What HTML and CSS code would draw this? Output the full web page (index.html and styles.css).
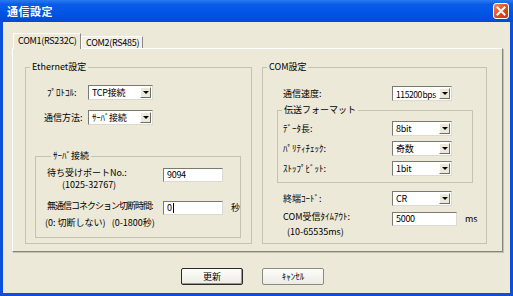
FILE: index.html
```html
<!DOCTYPE html>
<html lang="ja">
<head>
    <meta charset="UTF-8">
    <title>通信設定</title>
    <link rel="stylesheet" href="styles.css">
</head>
<body>
    <div class="window">
        <div class="titlebar">
            <span class="title">通信設定</span>
            <span class="close-btn">
                <svg width="10" height="10" viewBox="0 0 10 10">
                    <path d="M1.5 1.5 L8.5 8.5 M8.5 1.5 L1.5 8.5" stroke="#fff" stroke-width="2" stroke-linecap="square"/>
                </svg>
            </span>
        </div>

        <div class="client">
            <div class="tabs">
                <div class="tab active">COM1(RS232C)</div>
                <div class="tab">COM2(RS485)</div>
            </div>

            <div class="tab-panel">
                <fieldset class="group group-ethernet">
                    <legend>Ethernet設定</legend>
                    <div class="eth-grid">
                        <label class="indent">ﾌﾟﾛﾄｺﾙ:</label>
                        <div class="combo wide"><span>TCP接続</span><span class="combo-btn"></span></div>
                        <label>通信方法:</label>
                        <div class="combo wide"><span>ｻｰﾊﾞ接続</span><span class="combo-btn"></span></div>
                    </div>

                    <fieldset class="group group-server">
                        <legend>ｻｰﾊﾞ接続</legend>
                        <div class="field-row">
                            <div class="field-label">
                                <div>待ち受けポートNo.:</div>
                                <div class="hint">(1025-32767)</div>
                            </div>
                            <div class="textbox">9094</div>
                        </div>
                        <div class="field-row second">
                            <div class="field-label">
                                <div class="tight">無通信コネクション切断時間:</div>
                                <div class="hint hint-wide">(0: 切断しない)&nbsp;&nbsp;&nbsp;(0-1800秒)</div>
                            </div>
                            <div class="textbox">0<span class="caret"></span></div>
                            <span class="unit">秒</span>
                        </div>
                    </fieldset>
                </fieldset>

                <fieldset class="group group-com">
                    <legend>COM設定</legend>
                    <div class="com-row first">
                        <label>通信速度:</label>
                        <div class="combo"><span class="narrow">115200 bps</span><span class="combo-btn"></span></div>
                    </div>

                    <fieldset class="group group-format">
                        <legend>伝送フォーマット</legend>
                        <div class="com-row">
                            <label>ﾃﾞｰﾀ長:</label>
                            <div class="combo"><span>8bit</span><span class="combo-btn"></span></div>
                        </div>
                        <div class="com-row">
                            <label>ﾊﾟﾘﾃｨﾁｪｯｸ:</label>
                            <div class="combo"><span>奇数</span><span class="combo-btn"></span></div>
                        </div>
                        <div class="com-row">
                            <label>ｽﾄｯﾌﾟﾋﾞｯﾄ:</label>
                            <div class="combo"><span>1bit</span><span class="combo-btn"></span></div>
                        </div>
                    </fieldset>

                    <div class="com-row end-code">
                        <label>終端ｺｰﾄﾞ:</label>
                        <div class="combo"><span>CR</span><span class="combo-btn"></span></div>
                    </div>
                    <div class="com-row timeout">
                        <div class="com-label">
                            <div>COM受信ﾀｲﾑｱｳﾄ:</div>
                            <div class="hint">(10-65535ms)</div>
                        </div>
                        <div class="textbox wide">5000</div>
                        <span class="unit">ms</span>
                    </div>
                </fieldset>
            </div>

            <div class="buttons">
                <button class="btn default">更新</button>
                <button class="btn">ｷｬﾝｾﾙ</button>
            </div>
        </div>
    </div>
</body>
</html>
```

FILE: styles.css
```css
* {
    box-sizing: border-box;
}
body {
    margin: 0;
    font-family: "Noto Sans CJK JP", "Liberation Sans", sans-serif;
    font-size: 9px;
    line-height: 12px;
    color: #000;
}
.window {
    width: 513px;
    height: 296px;
    background: #0a50d8;
    display: flex;
    flex-direction: column;
}
.titlebar {
    height: 22px;
    display: flex;
    align-items: center;
    justify-content: space-between;
    padding: 0 4px 0 7px;
    background: linear-gradient(#2a7bf0 0%, #0a5ce6 20%, #0055e5 60%, #0449d4 100%);
}
.title {
    color: #fff;
    font-weight: bold;
    font-size: 11px;
    letter-spacing: 0.5px;
}
.close-btn {
    width: 16px;
    height: 16px;
    border: 1px solid #fff;
    border-radius: 3px;
    background: linear-gradient(135deg, #f08a64, #d8461c 60%, #c33a14);
    display: flex;
    align-items: center;
    justify-content: center;
}
.client {
    flex: 1;
    margin: 0 3px 3px 3px;
    background: #ece9d8;
}
.tabs {
    display: flex;
    align-items: flex-end;
    height: 15px;
    margin: 11px 0 0 10px;
}
.tab {
    height: 12px;
    width: 62px;
    padding-left: 4px;
    line-height: 12px;
    background: #f2f0e6;
    border-top: 1px solid #fff;
    border-left: 1px solid #fff;
    border-right: 1px solid #8a8a80;
    letter-spacing: -0.3px;
    white-space: nowrap;
}
.tab.active {
    position: relative;
    z-index: 1;
    width: 68px;
    height: 16px;
    margin-bottom: -1px;
    padding-left: 4px;
    line-height: 14px;
    background: #ece9d8;
}
.tab-panel {
    width: 491px;
    height: 204px;
    margin-left: 9px;
    display: flex;
    gap: 10px;
    padding: 12px 15px 7px 12px;
    border-top: 1px solid #fff;
    border-left: 1px solid #fff;
    border-right: 1px solid #868680;
    border-bottom: 1px solid #868680;
    box-shadow: 1px 1px 0 #c4c2b4;
}
.group {
    margin: 0;
    padding: 0;
    min-width: 0;
    border: 1px solid #c5c2b2;
}
.group legend {
    margin-left: 4px;
    padding: 0 2px;
    line-height: 12px;
}
.group-ethernet {
    width: 227px;
}
.group-com {
    width: 225px;
}
.eth-grid {
    display: grid;
    grid-template-columns: 44px 65px;
    row-gap: 10px;
    align-items: center;
    margin-top: 12px;
    padding-left: 18px;
}
.eth-grid .indent {
    padding-left: 3px;
}
.combo {
    width: 60px;
    height: 15px;
    display: flex;
    align-items: center;
    justify-content: space-between;
    padding: 0 1px 0 3px;
    background: #fff;
    border-top: 1px solid #7a7a72;
    border-left: 1px solid #7a7a72;
    border-right: 1px solid #dcdad0;
    border-bottom: 1px solid #dcdad0;
    white-space: nowrap;
    letter-spacing: -0.3px;
}
.combo.wide {
    width: 65px;
}
.combo .narrow {
    font-size: 8.5px;
    letter-spacing: -0.4px;
    word-spacing: -1px;
}
.combo-btn {
    flex: none;
    width: 11px;
    height: 11px;
    background: #ece9d8;
    border-top: 1px solid #fff;
    border-left: 1px solid #fff;
    border-right: 1px solid #6e6e66;
    border-bottom: 1px solid #6e6e66;
    display: flex;
    align-items: center;
    justify-content: center;
}
.combo-btn::after {
    content: "";
    border-left: 3px solid transparent;
    border-right: 3px solid transparent;
    border-top: 3px solid #000;
}
.textbox {
    width: 60px;
    height: 14px;
    margin-top: 1px;
    padding-left: 3px;
    line-height: 12px;
    background: #fff;
    border-top: 1px solid #7a7a72;
    border-left: 1px solid #7a7a72;
    border-right: 1px solid #dcdad0;
    border-bottom: 1px solid #dcdad0;
    display: flex;
    align-items: center;
    letter-spacing: -0.3px;
}
.textbox.wide {
    width: 65px;
}
.caret {
    width: 1px;
    height: 10px;
    margin-left: 1px;
    background: #000;
}
.unit {
    margin: 2px 0 0 8px;
}
.group-server {
    margin: 25px 10px 0 9px;
    padding: 5px 0 0 11px;
    height: 88px;
}
.field-row {
    display: flex;
    align-items: flex-start;
}
.field-row.second {
    margin-top: 9px;
}
.field-label {
    width: 116px;
    white-space: nowrap;
}
.tight {
    letter-spacing: -1px;
}
.hint {
    padding-left: 15px;
}
.hint.hint-wide {
    margin-top: 5px;
    padding-left: 0;
    margin-left: -2px;
}
.com-row {
    display: flex;
    align-items: center;
    padding-left: 20px;
}
.com-row label,
.com-label {
    width: 109px;
}
.com-row.first {
    margin-top: 13px;
}
.group-format {
    margin: 3px 13px 0 14px;
    padding: 5px 0 6px 0;
}
.group-format .com-row {
    padding-left: 5px;
}
.group-format .com-row + .com-row {
    margin-top: 5px;
}
.com-row.end-code {
    margin-top: 8px;
}
.com-row.timeout {
    align-items: flex-start;
    margin-top: 5px;
}
.com-label .hint {
    padding-left: 4px;
    margin-top: 3px;
}
.buttons {
    display: flex;
    gap: 19px;
    margin-top: 16px;
    padding-left: 178px;
}
.btn {
    width: 62px;
    height: 17px;
    padding: 0;
    font-family: inherit;
    font-size: 9px;
    line-height: 12px;
    background: linear-gradient(#fdfdfb, #ecebe4);
    border: 1px solid #8a8a80;
    border-radius: 2px;
}
.btn.default {
    border: 1px solid #2a2a2a;
    box-shadow: inset -1px -1px 0 #9a988c;
}
```
